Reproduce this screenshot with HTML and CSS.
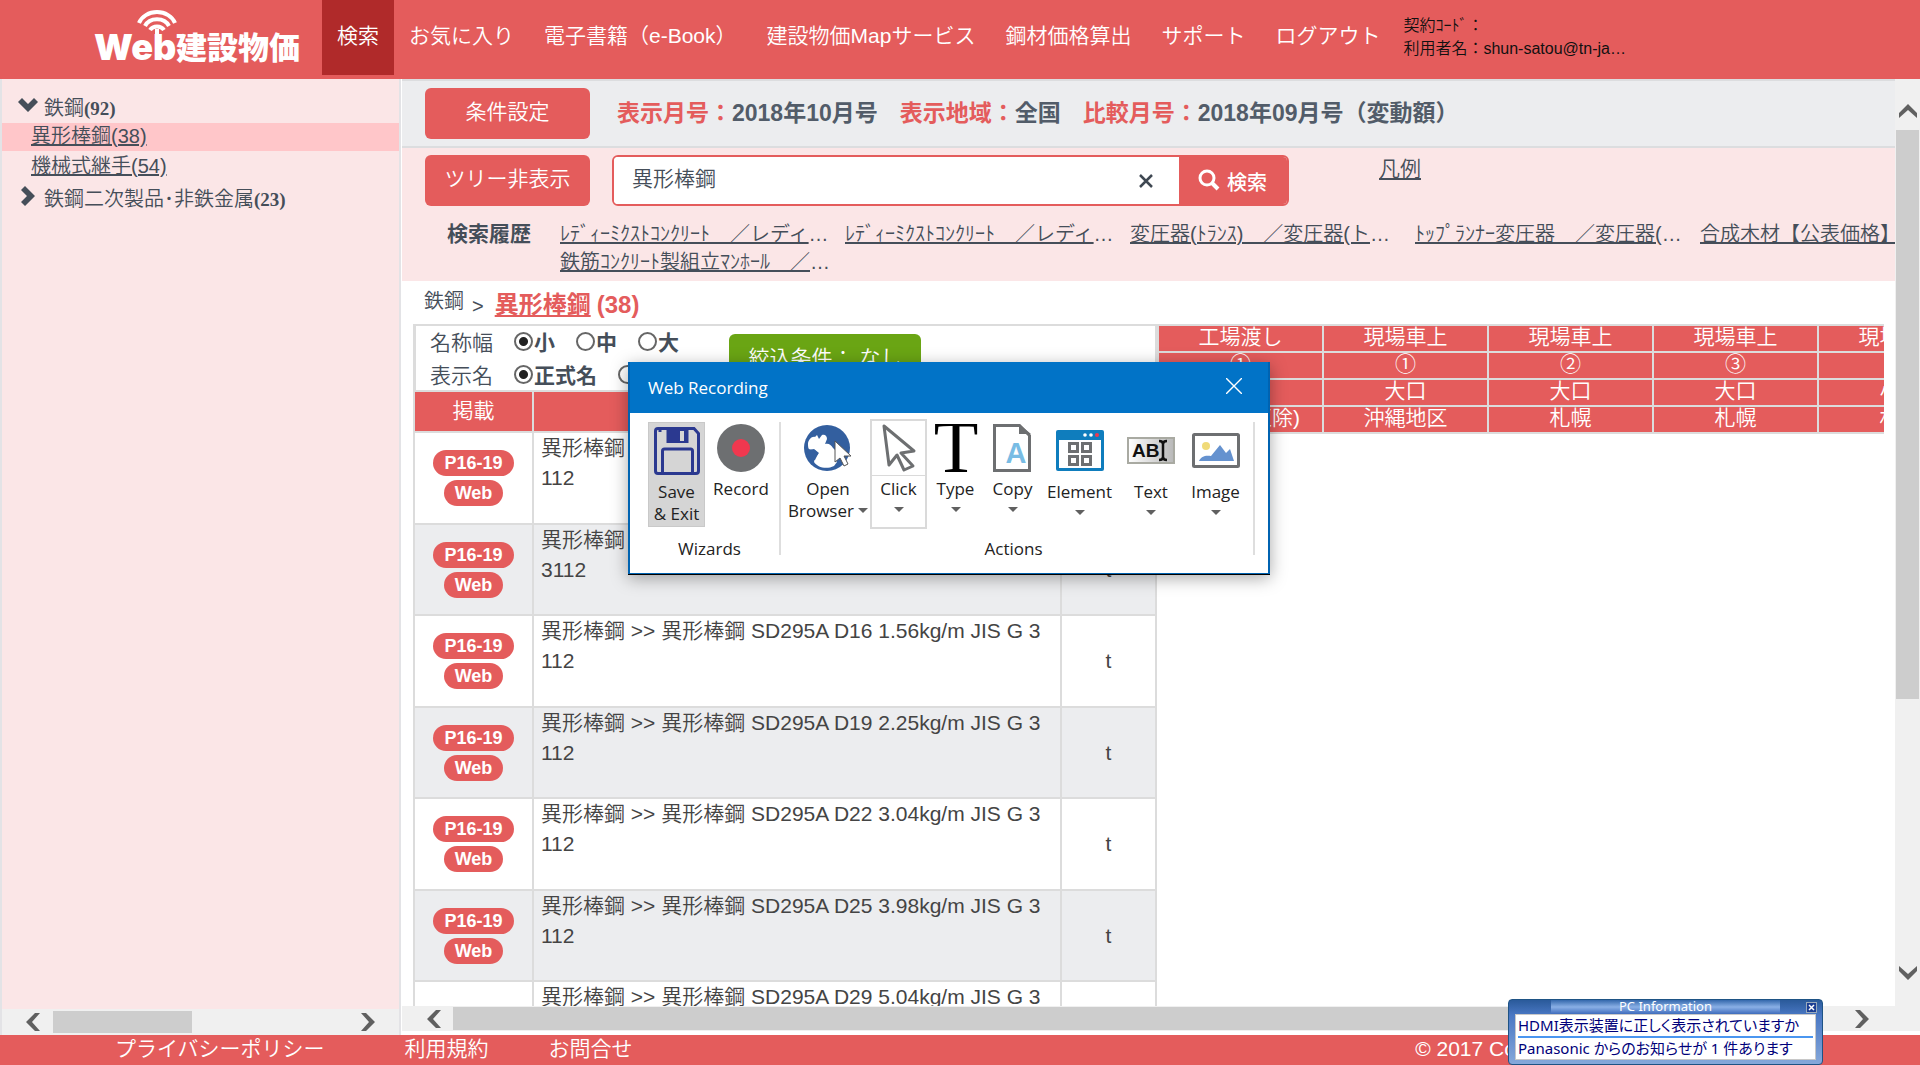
FILE: index.html
```html
<!DOCTYPE html>
<html lang="ja">
<head>
<meta charset="utf-8">
<title>Web建設物価</title>
<link rel="stylesheet" href="styles.css">
</head>
<body>
<header class="header">
  <a class="logo" href="#" aria-label="Web建設物価">
    <svg width="210" height="66" viewBox="0 0 210 66" fill="none" stroke="#fff">
      <path d="M45 20a19 16 0 0 1 36 0M51 23a13 11 0 0 1 24 0M56 27a8 7 0 0 1 14 0" stroke-width="4"/>
      <path d="M63 26v20" stroke-width="4"/>
      <text class="logo-latin" x="0" y="57">Web</text>
      <text class="logo-kanji" x="82" y="56">建設物価</text>
    </svg>
  </a>
  <nav class="nav">
    <a class="nav-item active" href="#">検索</a>
    <a class="nav-item" href="#">お気に入り</a>
    <a class="nav-item" href="#">電子書籍（e-Book）</a>
    <a class="nav-item" href="#">建設物価Mapサービス</a>
    <a class="nav-item" href="#">鋼材価格算出</a>
    <a class="nav-item" href="#">サポート</a>
    <a class="nav-item" href="#">ログアウト</a>
  </nav>
  <div class="user"><span>契約ｺｰﾄﾞ：</span><span>利用者名：shun-satou@tn-ja…</span></div>
</header>

<div class="workspace">
  <aside class="sidebar">
    <div class="tree">
      <div class="tree-group">
        <svg width="20" height="20" viewBox="0 0 20 20"><path d="M0 7l4-4 6 6 6-6 4 4-10 10z" fill="#454e59"/></svg>
        <span>鉄鋼<b>(92)</b></span>
      </div>
      <a class="tree-link current" href="#"><span>異形棒鋼(38)</span></a>
      <a class="tree-link" href="#"><span>機械式継手(54)</span></a>
      <div class="tree-group last">
        <svg width="20" height="20" viewBox="0 0 20 20"><path d="M7 0L3 4l6 6-6 6 4 4 10-10z" fill="#454e59"/></svg>
        <span>鉄鋼二次製品･非鉄金属<b>(23)</b></span>
      </div>
    </div>
    <div class="hbar side-bar" aria-hidden="true">
      <svg width="14" height="18" viewBox="0 0 14 18"><path d="M9 0h5L6 9l8 9H9L0 9z" fill="#606060"/></svg>
      <div class="track"><div class="thumb"></div></div>
      <svg width="14" height="18" viewBox="0 0 14 18"><path d="M5 0H0l8 9-8 9h5l9-9z" fill="#606060"/></svg>
    </div>
  </aside>

  <div class="main-wrap">
    <div class="main-row">
    <main class="main">
      <section class="conditions">
        <button class="btn" type="button">条件設定</button>
        <dl class="facts">
          <div><dt>表示月号：</dt><dd>2018年10月号</dd></div>
          <div><dt>表示地域：</dt><dd>全国</dd></div>
          <div><dt>比較月号：</dt><dd>2018年09月号（変動額）</dd></div>
        </dl>
      </section>
      <section class="search">
        <div class="search-row">
          <button class="btn" type="button">ツリー非表示</button>
          <form class="search-form">
            <input class="search-input" type="text" aria-label="検索キーワード" value="異形棒鋼">
            <button class="clear" type="button" aria-label="クリア"><svg width="16" height="16" viewBox="0 0 16 16"><path d="M2 2l12 12M14 2L2 14" stroke="#3f4852" stroke-width="2.500"/></svg></button>
            <button class="search-btn" type="button"><svg width="22" height="22" viewBox="0 0 22 22" fill="none" stroke="#fff"><circle cx="9" cy="9" r="7" stroke-width="3"/><path d="M14 14l6 6" stroke-width="4"/></svg>検索</button>
          </form>
          <a class="legend" href="#">凡例</a>
        </div>
        <div class="history">
          <h2>検索履歴</h2>
          <ul>
            <li><a href="#">ﾚﾃﾞｨｰﾐｸｽﾄｺﾝｸﾘｰﾄ　／レディーミクストコンクリート</a></li>
            <li><a href="#">ﾚﾃﾞｨｰﾐｸｽﾄｺﾝｸﾘｰﾄ　／レディーミクストコンクリート</a></li>
            <li><a href="#">変圧器(ﾄﾗﾝｽ)　／変圧器(トランス)</a></li>
            <li><a href="#">ﾄｯﾌﾟﾗﾝﾅｰ変圧器　／変圧器(トランス)</a></li>
            <li><a href="#">合成木材【公表価格】　／合成木材</a></li>
            <li><a href="#">鉄筋ｺﾝｸﾘｰﾄ製組立ﾏﾝﾎｰﾙ　／鉄筋コンクリート</a></li>
          </ul>
        </div>
      </section>
      <section class="results">
        <h1 class="crumbs"><span>鉄鋼</span><i>&gt;</i><a href="#">異形棒鋼</a><b>(38)</b></h1>
        <div class="tables">
          <div class="items">
            <div class="options">
              <div class="radios">
                <div class="radio-row"><span>名称幅</span>
                  <label><input type="radio" name="w" checked>小</label><label><input type="radio" name="w">中</label><label><input type="radio" name="w">大</label></div>
                <div class="radio-row"><span>表示名</span>
                  <label><input type="radio" name="n" checked>正式名</label><label><input type="radio" name="n">略称</label></div>
              </div>
              <button class="filter" type="button">絞込条件： なし</button>
            </div>
            <table class="item-table">
              <colgroup><col class="c-page"><col><col class="c-unit"></colgroup>
              <thead><tr><th>掲載</th><th>品名・規格</th><th>単位</th></tr></thead>
              <tbody>
                <tr><td><span class="pill">P16-19</span><span class="pill">Web</span></td><td>異形棒鋼 &gt;&gt; 異形棒鋼 SD295A D10 0.56kg/m JIS G 3<br>112</td><td>t</td></tr>
                <tr><td><span class="pill">P16-19</span><span class="pill">Web</span></td><td>異形棒鋼 &gt;&gt; 異形棒鋼 SD295A D13 0.995kg/m JIS G<br>3112</td><td>t</td></tr>
                <tr><td><span class="pill">P16-19</span><span class="pill">Web</span></td><td>異形棒鋼 &gt;&gt; 異形棒鋼 SD295A D16 1.56kg/m JIS G 3<br>112</td><td>t</td></tr>
                <tr><td><span class="pill">P16-19</span><span class="pill">Web</span></td><td>異形棒鋼 &gt;&gt; 異形棒鋼 SD295A D19 2.25kg/m JIS G 3<br>112</td><td>t</td></tr>
                <tr><td><span class="pill">P16-19</span><span class="pill">Web</span></td><td>異形棒鋼 &gt;&gt; 異形棒鋼 SD295A D22 3.04kg/m JIS G 3<br>112</td><td>t</td></tr>
                <tr><td><span class="pill">P16-19</span><span class="pill">Web</span></td><td>異形棒鋼 &gt;&gt; 異形棒鋼 SD295A D25 3.98kg/m JIS G 3<br>112</td><td>t</td></tr>
                <tr><td></td><td>異形棒鋼 &gt;&gt; 異形棒鋼 SD295A D29 5.04kg/m JIS G 3<br>112</td><td>t</td></tr>
              </tbody>
            </table>
          </div>
          <div class="prices">
            <table class="price-table">
              <tr><th>工場渡し</th><th>現場車上</th><th>現場車上</th><th>現場車上</th><th>現場車上</th></tr>
              <tr><th>①</th><th>①</th><th>②</th><th>③</th><th>④</th></tr>
              <tr><th>大口</th><th>大口</th><th>大口</th><th>大口</th><th>小口</th></tr>
              <tr><th>(沖縄地区除)</th><th>沖縄地区</th><th>札幌</th><th>札幌</th><th>札幌</th></tr>
            </table>
          </div>
        </div>
      </section>
    </main>
    <div class="vbar" aria-hidden="true">
      <svg width="18" height="14" viewBox="0 0 18 14"><path d="M0 9v5l9-8 9 8V9L9 0z" fill="#606060"/></svg>
      <div class="vtrack"><div class="vthumb"></div></div>
      <svg width="18" height="14" viewBox="0 0 18 14"><path d="M0 5V0l9 8 9-8v5l-9 9z" fill="#606060"/></svg>
    </div>
    </div>
    <div class="hbar main-bar" aria-hidden="true">
      <svg width="14" height="18" viewBox="0 0 14 18"><path d="M9 0h5L6 9l8 9H9L0 9z" fill="#606060"/></svg>
      <div class="track"><div class="thumb"></div></div>
      <svg width="14" height="18" viewBox="0 0 14 18"><path d="M5 0H0l8 9-8 9h5l9-9z" fill="#606060"/></svg>
    </div>
  </div>
</div>

<footer class="footer">
  <a class="f-privacy" href="#">プライバシーポリシー</a><a class="f-terms" href="#">利用規約</a><a href="#">お問合せ</a>
  <small>© 2017 Construction Research Institute</small>
</footer>

<section class="recorder" role="dialog" aria-label="Web Recording">
  <div class="rec-title"><span>Web Recording</span>
    <button type="button" aria-label="Close"><svg width="16" height="16" viewBox="0 0 16 16"><path d="M0 0l16 16M16 0L0 16" stroke="#fff" stroke-width="1.4"/></svg></button></div>
  <div class="rec-body">
    <div class="group">
      <div class="tools">
        <button class="tool save" type="button">
          <svg width="46" height="48" viewBox="0 0 46 48" fill="none" stroke="#2b3990" stroke-width="3"><path d="M4 1.500h36l4.500 5V44q0 2.500-2.500 2.500H4q-2.500 0-2.500-2.500V4q0-2.500 2.500-2.500z"/><path d="M12.500 2h22v14h-22z" fill="#2b3990" stroke="none"/><path d="M26 4h4v10h-4z" fill="#d5d5d5" stroke="none"/><path d="M8.500 46V24q0-2 2-2h26q2 0 2 2v22M6 2v3"/></svg>
          <span>Save<br>&amp; Exit</span></button>
        <button class="tool record" type="button">
          <svg width="48" height="48" viewBox="0 0 48 48"><circle cx="24" cy="24" r="24" fill="#6d6f71"/><circle cx="24" cy="24" r="9" fill="#f0384f"/></svg>
          <span>Record</span></button>
      </div>
      <p>Wizards</p>
    </div>
    <div class="group actions">
      <div class="tools">
        <button class="tool browser" type="button">
          <svg width="48" height="48" viewBox="0 0 48 48"><circle cx="23" cy="24" r="23" fill="#335f9f"/><path d="M4 20c0-4 4-8 7-7l2-2 2 4 3-4c3-1 5 1 5 4l-2 5c4-1 6 1 8 4l2 2v10l2 2-3 4c-8 4-17 1-20-4l1-4 4-5-5-4-4 1c-2-1-2-4-2-6z" fill="#fff"/><path d="M3 25l8 1 3 4-3 6-4 0c-3-3-4-7-4-11z" fill="#335f9f"/><path d="M31 17v21l5-4 4 8 4-2-4-8h7z" fill="#fff" stroke="#555" stroke-width="1"/></svg>
          <span>Open<br>Browser<i class="caret inline"></i></span></button>
        <button class="tool click" type="button">
          <svg width="48" height="48" viewBox="0 0 48 48"><path d="M9 2l30 25-13 2 12 13-9 4-7-15-8 10z" fill="#fff" stroke="#6d6f71" stroke-width="3" stroke-linejoin="round"/></svg>
          <span>Click</span><i class="caret"></i></button>
        <button class="tool type" type="button">
          <svg width="48" height="48" viewBox="0 0 48 48"><text class="glyph-t" x="24" y="48" text-anchor="middle">T</text></svg>
          <span>Type</span><i class="caret"></i></button>
        <button class="tool copy" type="button">
          <svg width="48" height="48" viewBox="0 0 48 48"><path d="M5.500 1.500h25l10 10v35h-35z" fill="#fff" stroke="#6d6f71" stroke-width="3"/><path d="M30 0v10h12z" fill="#6d6f71"/><text class="glyph-a" x="27" y="39" text-anchor="middle">A</text></svg>
          <span>Copy</span><i class="caret"></i></button>
        <button class="tool element" type="button">
          <svg width="48" height="51" viewBox="0 0 48 51"><rect x="0" y="6" width="48" height="41" rx="2" fill="#0f7dbd"/><path d="M3 16h42v28H3z" fill="#fff"/><circle cx="29" cy="11" r="1.800" fill="#fff"/><circle cx="35" cy="11" r="1.800" fill="#fff"/><circle cx="41" cy="11" r="2" fill="#f0384f"/><path d="M13.500 19.500h8v8h-8zM26.500 19.500h8v8h-8zM13.500 32.500h8v8h-8zM26.500 32.500h8v8h-8z" fill="none" stroke="#6d6f71" stroke-width="3"/></svg>
          <span>Element</span><i class="caret"></i></button>
        <button class="tool text" type="button">
          <svg width="48" height="51" viewBox="0 0 48 51"><defs><linearGradient id="g"><stop offset="0" stop-color="#fff"/><stop offset="1" stop-color="#b8b8b8"/></linearGradient></defs><rect x="1" y="14" width="46" height="25" fill="url(#g)" stroke="#a9aaa2" stroke-width="2"/><text class="glyph-ab" x="5" y="33">AB</text><path d="M32 17q4 0 4 3v13q0 3-4 3M40 17q-4 0-4 3v13q0 3 4 3" fill="none" stroke="#111" stroke-width="2.500"/></svg>
          <span>Text</span><i class="caret"></i></button>
        <button class="tool image" type="button">
          <svg width="48" height="51" viewBox="0 0 48 51"><rect x="1.500" y="10.500" width="45" height="32" rx="1" fill="#fff" stroke="#6d6f71" stroke-width="3"/><circle cx="14" cy="22" r="4" fill="#f0da78"/><path d="M7 37c2-5 7-6 12-5l9-11 6 8 4-4 4 12z" fill="#6592cf"/></svg>
          <span>Image</span><i class="caret"></i></button>
      </div>
      <p>Actions</p>
    </div>
  </div>
</section>

<section class="pcinfo" role="dialog" aria-label="PC Information">
  <div class="pc-title"><span>PC Information</span>
    <button type="button" aria-label="閉じる"><svg width="9" height="9" viewBox="0 0 9 9"><path d="M2 2l5 5M7 2L2 7" stroke="#fff" stroke-width="1.500"/></svg></button></div>
  <div class="pc-body"><p>HDMI表示装置に正しく表示されていますか</p><p>Panasonic からのお知らせが 1 件あります</p></div>
</section>
</body>
</html>
```
FILE: styles.css
```css
:root {
  --red: #e45c5c;
  --ink: #454e59;
  --line: #dcdcdc;
  --pink: #fbe6e7;
}
* { box-sizing: border-box; }
html, body { height: 100%; }
body {
  margin: 0;
  display: flex;
  flex-direction: column;
  overflow: hidden;
  background: #fff;
  color: var(--ink);
  font: 350 21px/28px "Liberation Sans", "Noto Sans CJK JP", sans-serif;
}
button, input { font: inherit; color: inherit; margin: 0; padding: 0; border: 0; }
button { background: none; white-space: nowrap; }
a { color: inherit; }
svg { display: block; flex: none; }
h1, h2, p, ul, dl, dd { margin: 0; padding: 0; font-weight: inherit; font-size: inherit; }
ul { list-style: none; }

/* Header */
.header { display: flex; flex: none; height: 79px; padding-left: 94px; background: var(--red); color: #fff; white-space: nowrap; overflow: hidden; }
.logo { width: 228px; padding-top: 3px; }
.logo text { fill: #fff; stroke: none; }
.logo-latin { font: 900 36px "Inter", sans-serif; }
.logo-kanji { font: 900 31px "Noto Sans CJK JP", sans-serif; }
.nav { display: flex; height: 75px; }
.nav-item { padding: 22px 15px 0; color: #fff; text-decoration: none; }
.nav-item.active { background: #b02a2a; }
.user { display: flex; flex-direction: column; padding: 14px 0 0 8px; color: #111; font-size: 16px; line-height: 23px; }

/* Layout */
.workspace { display: flex; flex: 1; min-height: 0; }
.sidebar { display: flex; flex: none; flex-direction: column; width: 401px; border: solid #e3e3e6; border-width: 0 2px; background: var(--pink); }
.tree { flex: 1; padding-top: 13px; font-size: 20px; white-space: nowrap; }
.tree-group { display: flex; gap: 6px; align-items: center; height: 31px; padding-left: 16px; }
.tree-group svg { margin-bottom: 6px; }
.tree-group b { font: 700 19px "Liberation Serif", serif; }
.tree-link { display: block; height: 28px; padding-left: 29px; line-height: 26px; }
.tree-link.current { margin-bottom: 2px; background: #ffc6c9; }
.tree-group.last { margin-top: 2px; }

.hbar { display: flex; flex: none; align-items: center; background: #f0f0f0; }
.track { flex: 1; }
.thumb { background: #cdcdcd; }
.side-bar { height: 26px; padding: 0 24px; gap: 13px; }
.side-bar .track { padding-right: 156px; }
.side-bar .thumb { height: 22px; }
.main-bar { height: 25px; margin-bottom: 4px; padding: 0 51px 0 25px; gap: 12px; }
.main-bar .thumb { height: 23px; width: 88%; }

.main-wrap { display: flex; flex: 1; flex-direction: column; min-width: 0; padding-left: 1px; }
.main-row { display: flex; flex: 1; min-height: 0; }
.main { display: flex; flex: 1; flex-direction: column; min-width: 0; overflow: hidden; }
.vbar { display: flex; flex: none; flex-direction: column; align-items: center; gap: 12px; width: 25px; padding: 25px 0 26px; background: #f0f0f0; }
.vtrack { flex: 1; width: 23px; }
.vthumb { height: 69%; background: #cdcdcd; }

/* Condition bar */
.conditions { display: flex; flex: none; align-items: center; gap: 27px; height: 69px; padding-left: 23px; border: solid #dcdddf; border-width: 2px 0; background: #ecedef; }
.btn { flex: none; width: 165px; height: 51px; padding-bottom: 4px; border-radius: 6px; background: var(--red); color: #fff; }
.facts { display: flex; gap: 22px; padding-bottom: 2px; font-weight: 700; font-size: 23px; white-space: nowrap; }
.facts div { display: flex; }
.facts dt { color: var(--red); }
.facts dd { color: #525c69; }

/* Search */
.search { flex: none; height: 133px; padding: 7px 0 0 23px; background: var(--pink); }
.search-row { display: flex; }
.search-form { display: flex; flex: none; width: 677px; height: 51px; margin: 0 90px 0 22px; border: 2px solid var(--red); border-radius: 6px; background: #fff; overflow: hidden; }
.search-input { flex: 1; min-width: 0; padding: 0 18px 4px; background: #fff; outline: 0; }
.clear { width: 56px; padding-left: 15px; }
.search-btn { display: flex; align-items: center; gap: 7px; width: 108px; padding: 5px 0 0 19px; background: var(--red); color: #fff; font-size: 20px; font-weight: 500; }
.search-btn svg { margin-bottom: 6px; }
.legend { white-space: nowrap; }
.history { display: flex; padding: 14px 0 0 22px; }
.history h2 { flex: none; width: 113px; font-weight: 700; }
.history ul { display: grid; flex: none; grid-template-columns: repeat(5, 270px); column-gap: 15px; font-size: 20px; }
.history li { overflow: hidden; white-space: nowrap; text-overflow: ellipsis; }

/* Results */
.results { display: flex; flex: 1; flex-direction: column; min-height: 0; padding: 0 11px; }
.crumbs { display: flex; flex: none; height: 43px; padding: 6px 0 0 11px; font-size: 20px; white-space: nowrap; }
.crumbs i { margin: 5px 11px 0 8px; font-style: normal; }
.crumbs a, .crumbs b { padding-top: 4px; color: var(--red); font-size: 24px; font-weight: 700; }
.crumbs b { padding-left: 6px; }
.tables { display: flex; flex: 1; min-height: 0; overflow: hidden; }
.items { flex: none; width: 744px; }
.options { display: flex; height: 66px; padding-left: 14px; border: solid var(--line); border-width: 2px 2px 0 3px; }
.radios { width: 299px; }
.radio-row { display: flex; height: 33px; align-items: center; white-space: nowrap; }
.radio-row > span { width: 84px; }
.radio-row label { display: flex; align-items: center; margin-right: 21px; font-weight: 700; }
.radio-row input { appearance: none; width: 19px; height: 19px; margin: 0 1px 2px 0; border: 2px solid #666; border-radius: 50%; background: #fff; }
.radio-row input:checked { background: radial-gradient(circle, #222 4px, #fff 5px); }
.filter { width: 192px; height: 48px; margin-top: 8px; border-radius: 6px; background: #6aa514; color: #fff; }
table { border-collapse: collapse; table-layout: fixed; }
th { font-weight: inherit; background: var(--red); color: #fff; }
th, td { padding: 0; border: 2px solid var(--line); }
.item-table { width: 100%; color: #444; }
.c-page { width: 119px; }
.c-unit { width: 95px; }
.item-table th { height: 41px; padding-bottom: 2px; }
.item-table td { height: 92px; text-align: center; line-height: 30px; }
.item-table tbody tr:nth-child(even) { background: #ecedef; }
.item-table tbody tr:nth-child(even) td { height: 91px; }
.item-table td:nth-child(2) { padding-left: 7px; text-align: left; vertical-align: top; white-space: nowrap; }
.pill { display: block; width: max-content; margin: 4px auto; padding: 0 11px; border-radius: 13px; background: var(--red); color: #fff; font-size: 18px; font-weight: 700; line-height: 26px; }
.prices { flex: 1; min-width: 0; overflow: hidden; }
.price-table { width: 827px; }
.price-table th { height: 27px; padding-bottom: 3px; line-height: 22px; white-space: nowrap; }

/* Footer */
.footer { display: flex; flex: none; height: 30px; padding-left: 115px; background: var(--red); color: #fff; white-space: nowrap; }
.footer a { color: #fff; text-decoration: none; }
.f-privacy { margin-right: 80px; }
.f-terms { margin-right: 60px; }
.footer small { margin: 0 138px 0 auto; font-size: 21px; }

/* Recorder window floating over the page */
.recorder { position: absolute; left: 628px; top: 362px; width: 642px; border: solid #0063b1; border-width: 0 2px 1px; background: #fff; box-shadow: 0 1px 0 #000, 0 4px 16px rgba(0, 0, 0, .35); color: #222; font: 17px/22px "Open Sans", sans-serif; }
.rec-title { display: flex; justify-content: space-between; height: 51px; padding: 15px 26px 0 18px; background: #0173c7; color: #fff; }
.rec-title button { height: 18px; }
.rec-body { display: flex; height: 160px; padding: 6px 13px 0 18px; }
.group { display: flex; flex-direction: column; padding-right: 4px; background: linear-gradient(#dedede, #dedede) right 3px / 2px 133px no-repeat; background-origin: border-box; }
.group p { margin-top: auto; padding: 0 6px 13px 0; text-align: center; }
.actions { flex: 1; padding: 0 8px 0 5px; }
.tools { display: flex; }
.tool { display: flex; flex-direction: column; align-items: center; height: 110px; padding-top: 4px; border: 1px solid transparent; }
.tool span { margin-top: 6px; }
.save { width: 57px; height: 105px; margin-top: 3px; border-color: #c9c9c9; background: #d5d5d5; }
.record { width: 72px; }
.browser { width: 84px; }
.click { width: 57px; border: 2px solid #dadada; padding-top: 3px; background: linear-gradient(#dadada, #dadada) 0 54px / 100% 1px no-repeat; }
.type, .copy { width: 57px; }
.element { width: 77px; }
.text { width: 66px; }
.image { width: 63px; }
.caret { margin-top: 7px; border: 5px solid transparent; border-top-color: #606060; border-bottom: 0; }
.caret.inline { display: inline-block; margin: 0 0 4px 4px; }
.glyph-t { font: 73px "Liberation Serif", serif; fill: #000; }
.glyph-a { font: 700 29px "Liberation Sans", sans-serif; fill: #78bce4; }
.glyph-ab { font: 700 19px "Liberation Sans", sans-serif; fill: #111; }

/* Notification pinned to the bottom edge */
.pcinfo { position: absolute; right: 97px; bottom: 0; width: 315px; height: 66px; padding: 0 6px; border: 1px solid #1e5385; border-radius: 4px; background: linear-gradient(#2a5a9a, #4a78c4 24%, #86a8da); color: #00007a; font: 15px/21px "Noto Sans", "Noto Sans CJK JP", sans-serif; font-feature-settings: "palt"; }
.pc-title { display: flex; justify-content: center; height: 14px; margin: 0 36px; background: linear-gradient(#3468ac, #8ab0e6, #3f6cbc); color: #fff; font-size: 13px; line-height: 13px; }
.pc-title button { position: absolute; right: 5px; top: 2px; border: 1px solid #9ab; background: #1c3f94; }
.pc-body { height: 46px; padding: 0 2px; border: 1px solid #c8c8c8; background: #fff; white-space: nowrap; overflow: hidden; }
.pc-body p + p { border-top: 2px solid #4a96f0; }
```
